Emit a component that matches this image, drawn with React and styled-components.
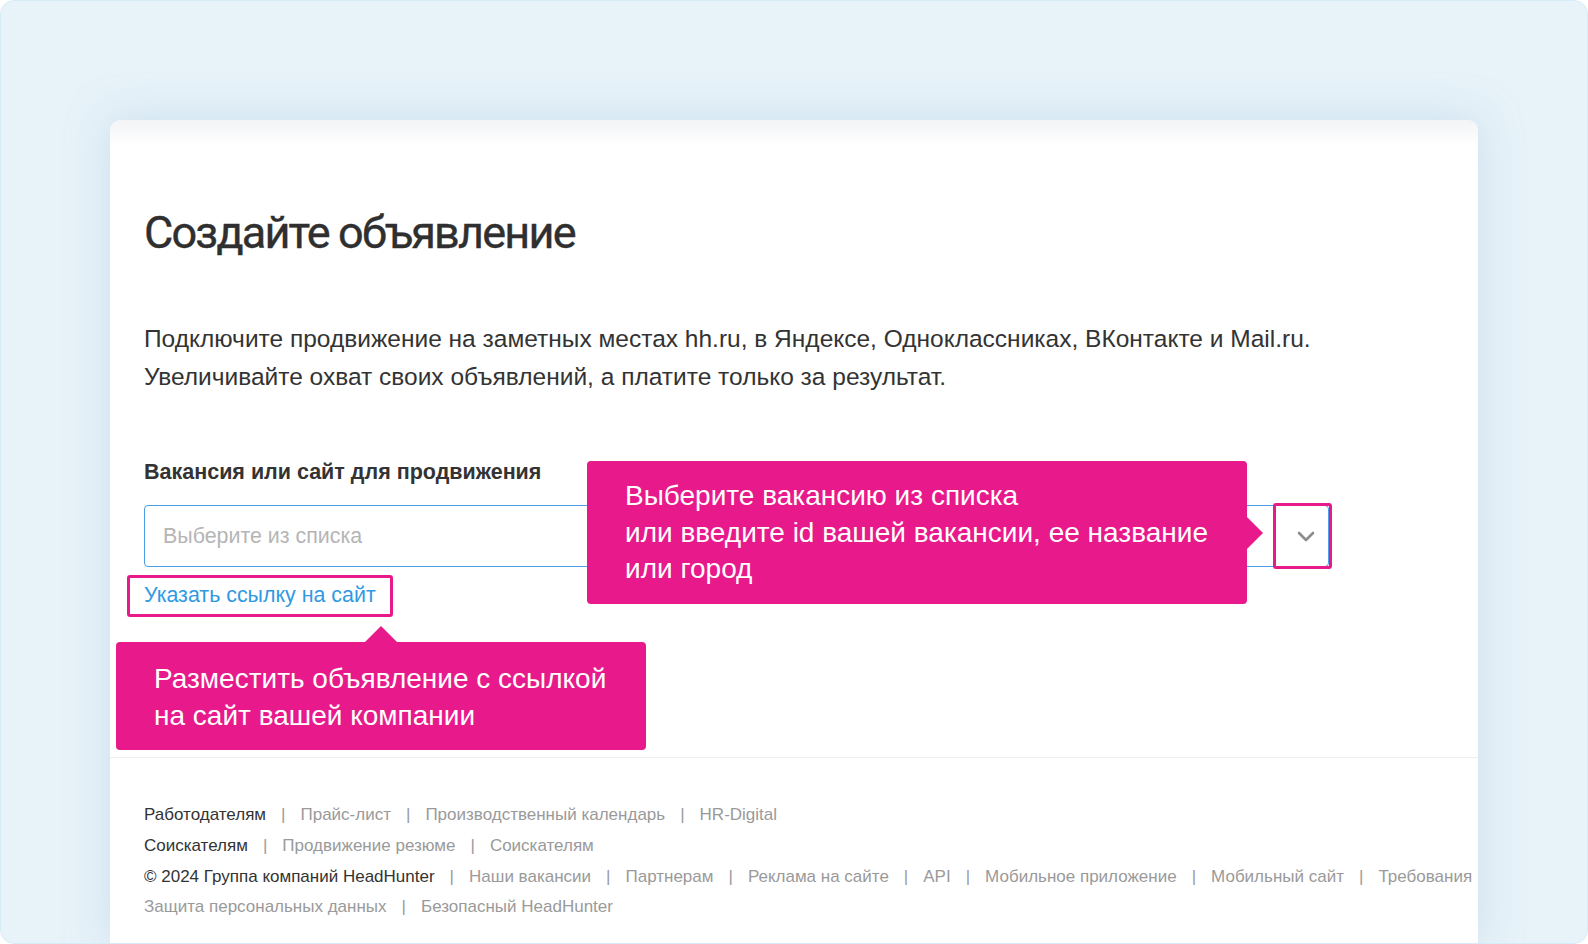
import React from "react";
import styled, { createGlobalStyle } from "styled-components";

const GlobalStyle = createGlobalStyle`
  html, body {
    margin: 0;
    padding: 0;
    background: #ffffff;
  }
  body {
    font-family: "Liberation Sans", Arial, sans-serif;
    color: #333;
  }
`;

const PINK = "#e8198b";

const Frame = styled.div`
  box-sizing: border-box;
  width: 1588px;
  height: 944px;
  border: 1px solid #d6edf7;
  border-radius: 14px;
  background: #e7f2f9;
  padding: 119px 109px 0 109px;
  overflow: hidden;
  display: flex;
`;

const Card = styled.div`
  position: relative;
  flex: 1;
  min-width: 0;
  background: linear-gradient(#f3f4f6, #ffffff 26px);
  border-radius: 10px 10px 0 0;
  box-shadow: 0 0 40px rgba(178, 208, 228, 0.55);
  display: flex;
  flex-direction: column;
`;

const Main = styled.div`
  padding: 85px 34px 0 34px;
  height: 637px;
  box-sizing: border-box;
`;

const Title = styled.h1`
  margin: 0;
  font-family: Roboto, "Liberation Sans", sans-serif;
  font-weight: 400;
  font-size: 45px;
  line-height: 55px;
  letter-spacing: -1.8px;
  color: #2f2f2f;
  -webkit-text-stroke: 0.4px #2f2f2f;
`;

const Lead = styled.p`
  margin: 60px 0 0 0;
  font-size: 24.5px;
  line-height: 37.5px;
  color: #333;
`;

const Label = styled.div`
  margin-top: 64px;
  font-weight: bold;
  font-size: 21.5px;
  line-height: 26px;
  color: #333;
`;

const Select = styled.div`
  margin-top: 20px;
  box-sizing: border-box;
  width: 1185px;
  height: 62px;
  border: 1px solid #4a9fe6;
  border-radius: 4px;
  display: flex;
  align-items: center;
`;

const Placeholder = styled.div`
  flex: 1;
  padding-left: 18px;
  font-size: 21.4px;
  color: #b5b5b5;
`;

const ArrowButton = styled.div`
  position: relative;
  width: 52px;
  height: 100%;
  box-sizing: border-box;
  padding-left: 8px;
  display: flex;
  align-items: center;
  justify-content: center;
  color: #8c8c8c;

  &::after {
    content: "";
    position: absolute;
    top: -3px;
    bottom: -3px;
    left: -3px;
    right: -4px;
    border: 3px solid ${PINK};
    border-radius: 3px;
  }
`;

const LinkHighlight = styled.div`
  display: inline-block;
  margin: 8px 0 0 -17px;
  padding: 5px 14px 6px 14px;
  border: 3px solid ${PINK};
  border-radius: 3px;
`;

const SiteLink = styled.a`
  font-size: 21.4px;
  line-height: 25px;
  color: #2f99e3;
  text-decoration: none;
`;

const Footer = styled.footer`
  border-top: 1px solid #efefef;
  padding: 42px 0 0 34px;
  display: flex;
  flex-direction: column;
  overflow: hidden;
`;

const FooterRow = styled.div`
  display: flex;
  white-space: nowrap;
  font-size: 17px;
  line-height: 30.8px;
`;

const FooterItem = styled.span`
  color: ${(p) => (p.$main ? "#333" : "#9a9a9a")};
`;

const Sep = styled.span`
  color: #9a9a9a;
  margin: 0 15px;
`;

const Tooltip = styled.div`
  position: absolute;
  box-sizing: border-box;
  background: ${PINK};
  color: #fff;
  border-radius: 4px;
  font-size: 28px;
  line-height: 36.5px;
  padding: 17px 38px;
`;

const VacancyTip = styled(Tooltip)`
  left: 477px;
  top: 341px;
  width: 660px;
  height: 143px;

  &::after {
    content: "";
    position: absolute;
    right: -16px;
    top: 50%;
    margin-top: -16px;
    border-style: solid;
    border-width: 16px 0 16px 16px;
    border-color: transparent transparent transparent ${PINK};
  }
`;

const SiteTip = styled(Tooltip)`
  left: 6px;
  top: 522px;
  width: 530px;
  height: 108px;
  padding-top: 19px;

  &::after {
    content: "";
    position: absolute;
    top: -16px;
    left: 249px;
    border-style: solid;
    border-width: 0 16px 16px 16px;
    border-color: transparent transparent ${PINK} transparent;
  }
`;

const footerRows = [
  [
    { text: "Работодателям", main: true },
    { text: "Прайс-лист" },
    { text: "Производственный календарь" },
    { text: "HR-Digital" },
  ],
  [
    { text: "Соискателям", main: true },
    { text: "Продвижение резюме" },
    { text: "Соискателям" },
  ],
  [
    { text: "© 2024 Группа компаний HeadHunter", main: true },
    { text: "Наши вакансии" },
    { text: "Партнерам" },
    { text: "Реклама на сайте" },
    { text: "API" },
    { text: "Мобильное приложение" },
    { text: "Мобильный сайт" },
    { text: "Требования" },
  ],
  [{ text: "Защита персональных данных" }, { text: "Безопасный HeadHunter" }],
];

function Chevron() {
  return (
    <svg width="18" height="11" viewBox="0 0 18 11" fill="none">
      <polyline
        points="2,2 9,9 16,2"
        stroke="currentColor"
        strokeWidth="2.6"
        strokeLinecap="round"
        strokeLinejoin="round"
      />
    </svg>
  );
}

export default function App() {
  return (
    <>
      <GlobalStyle />
      <Frame>
        <Card>
          <Main>
            <Title>Создайте объявление</Title>
            <Lead>
              Подключите продвижение на заметных местах hh.ru, в Яндексе,
              Одноклассниках, ВКонтакте и Mail.ru.
              <br />
              Увеличивайте охват своих объявлений, а платите только за
              результат.
            </Lead>
            <Label>Вакансия или сайт для продвижения</Label>
            <Select>
              <Placeholder>Выберите из списка</Placeholder>
              <ArrowButton>
                <Chevron />
              </ArrowButton>
            </Select>
            <LinkHighlight>
              <SiteLink href="#">Указать ссылку на сайт</SiteLink>
            </LinkHighlight>
          </Main>
          <Footer>
            {footerRows.map((row, i) => (
              <FooterRow key={i}>
                {row.map((item, j) => (
                  <React.Fragment key={item.text + j}>
                    {j > 0 && <Sep>|</Sep>}
                    <FooterItem $main={item.main}>{item.text}</FooterItem>
                  </React.Fragment>
                ))}
              </FooterRow>
            ))}
          </Footer>
          <VacancyTip>
            Выберите вакансию из списка
            <br />
            или введите id вашей вакансии, ее название
            <br />
            или город
          </VacancyTip>
          <SiteTip>
            Разместить объявление с ссылкой
            <br />
            на сайт вашей компании
          </SiteTip>
        </Card>
      </Frame>
    </>
  );
}
